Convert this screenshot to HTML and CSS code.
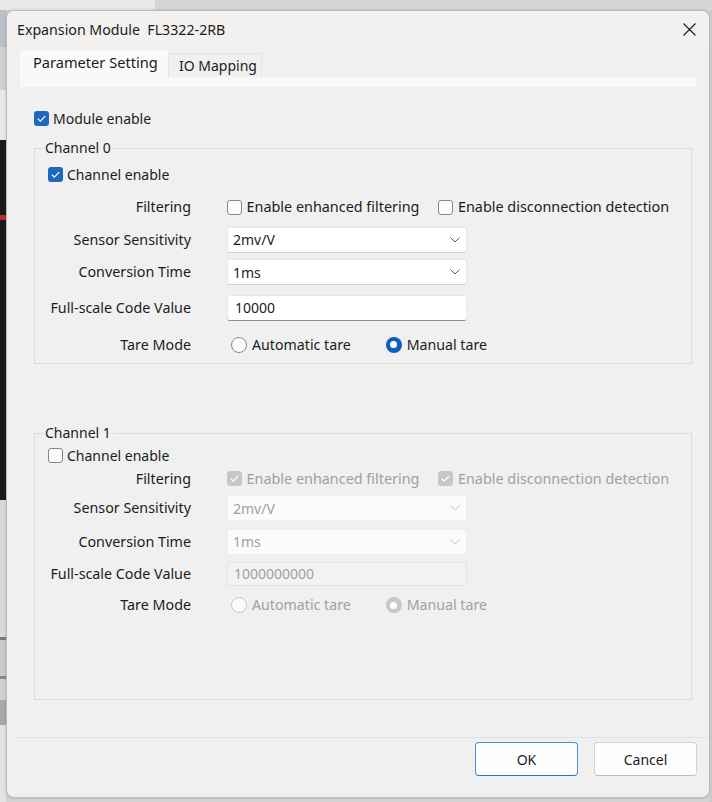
FILE: index.html
```html
<!DOCTYPE html>
<html>
<head>
<meta charset="utf-8">
<title>Expansion Module FL3322-2RB</title>
<link rel="stylesheet" href="styles.css">
</head>
<body>
<div class="top"></div>
<div class="screen">
  <div class="left"></div>
  <div class="dialog">
    <div class="titlebar">
      <span class="title">Expansion Module&nbsp; FL3322-2RB</span>
      <svg class="close" width="13" height="13" viewBox="0 0 13 13"><path d="M0.5 0.5 L12.5 12.5 M12.5 0.5 L0.5 12.5" stroke="#1a1a1a" stroke-width="1.1" fill="none"/></svg>
    </div>
    <div class="tabs">
      <div class="tab active">Parameter Setting</div>
      <div class="tab">IO Mapping</div>
    </div>
    <div class="tabpage"></div>
    <div class="body">
      <div class="check-row module">
        <span class="cb checked"><svg width="15" height="15" viewBox="0 0 15 15"><path d="M3.8 7.6 L6.3 10.1 L11.2 5.1" stroke="#fff" stroke-width="1.3" fill="none"/></svg></span>
        <span>Module enable</span>
      </div>

      <fieldset class="group g0">
        <legend>Channel 0</legend>
        <div class="grid rows0">
          <div class="check-row chen">
            <span class="cb checked"><svg width="15" height="15" viewBox="0 0 15 15"><path d="M3.8 7.6 L6.3 10.1 L11.2 5.1" stroke="#fff" stroke-width="1.3" fill="none"/></svg></span>
            <span>Channel enable</span>
          </div>
          <div class="lbl">Filtering</div>
          <div class="ctl filters">
            <span class="cb"></span><span class="ftext">Enable enhanced filtering</span>
            <span class="cb second"></span><span class="ftext">Enable disconnection detection</span>
          </div>
          <div class="lbl">Sensor Sensitivity</div>
          <div class="ctl"><div class="combo"><span>2mv/V</span><svg width="10" height="6" viewBox="0 0 10 6"><path d="M0.5 0.5 L5 5 L9.5 0.5" stroke="#5c5c5c" stroke-width="1" fill="none"/></svg></div></div>
          <div class="lbl">Conversion Time</div>
          <div class="ctl"><div class="combo"><span>1ms</span><svg width="10" height="6" viewBox="0 0 10 6"><path d="M0.5 0.5 L5 5 L9.5 0.5" stroke="#5c5c5c" stroke-width="1" fill="none"/></svg></div></div>
          <div class="lbl">Full-scale Code Value</div>
          <div class="ctl"><div class="field">10000</div></div>
          <div class="lbl">Tare Mode</div>
          <div class="ctl radios">
            <span class="rb"></span><span class="rtext">Automatic tare</span>
            <span class="rb checked second"></span><span class="rtext">Manual tare</span>
          </div>
        </div>
      </fieldset>

      <fieldset class="group g1">
        <legend>Channel 1</legend>
        <div class="grid rows1">
          <div class="check-row chen">
            <span class="cb"></span>
            <span>Channel enable</span>
          </div>
          <div class="lbl">Filtering</div>
          <div class="ctl filters disabled">
            <span class="cb checked dis"><svg width="15" height="15" viewBox="0 0 15 15"><path d="M3.8 7.6 L6.3 10.1 L11.2 5.1" stroke="#fff" stroke-width="1.3" fill="none"/></svg></span><span class="ftext">Enable enhanced filtering</span>
            <span class="cb checked dis second"><svg width="15" height="15" viewBox="0 0 15 15"><path d="M3.8 7.6 L6.3 10.1 L11.2 5.1" stroke="#fff" stroke-width="1.3" fill="none"/></svg></span><span class="ftext">Enable disconnection detection</span>
          </div>
          <div class="lbl">Sensor Sensitivity</div>
          <div class="ctl"><div class="combo dis"><span>2mv/V</span><svg width="10" height="6" viewBox="0 0 10 6"><path d="M0.5 0.5 L5 5 L9.5 0.5" stroke="#c4c4c4" stroke-width="1" fill="none"/></svg></div></div>
          <div class="lbl">Conversion Time</div>
          <div class="ctl"><div class="combo dis"><span>1ms</span><svg width="10" height="6" viewBox="0 0 10 6"><path d="M0.5 0.5 L5 5 L9.5 0.5" stroke="#c4c4c4" stroke-width="1" fill="none"/></svg></div></div>
          <div class="lbl">Full-scale Code Value</div>
          <div class="ctl"><div class="field dis">1000000000</div></div>
          <div class="lbl">Tare Mode</div>
          <div class="ctl radios disabled">
            <span class="rb dis"></span><span class="rtext">Automatic tare</span>
            <span class="rb checked dis second"></span><span class="rtext">Manual tare</span>
          </div>
        </div>
      </fieldset>
    </div>
    <div class="footer">
      <button class="btn ok">OK</button>
      <button class="btn">Cancel</button>
    </div>
  </div>
  <div class="right"></div>
</div>
</body>
</html>
```
FILE: styles.css
```css
* { box-sizing: border-box; }

body {
  margin: 0;
  width: 712px;
  height: 802px;
  overflow: hidden;
  font-family: "Noto Sans", "Open Sans", sans-serif;
  font-size: 14px;
  color: #1c1c1c;
  background: #d3d3d3;
}

.top {
  height: 10px;
  background: linear-gradient(to right, #e9e9e9 0 155px, #d6d6d6 155px);
}

.screen {
  display: flex;
  height: 792px;
  background: #d3d3d3;
}

.left {
  width: 6px;
  flex: none;
  background: linear-gradient(to bottom,
    #b9c0c8 0 37px, #d0d0d0 37px 80px, #e9e9e9 80px 130px,
    #1b1b1b 130px 205px, #b83030 205px 210px, #1b1b1b 210px 490px,
    #dadada 490px 627px, #7a7a7a 627px 630px, #cacaca 630px 666px,
    #8a8a8a 666px 669px, #d0d0d0 669px 690px, #a9a9a9 690px 715px,
    #e3e3e3 715px);
}

.right {
  width: 2px;
  flex: none;
  background: #c9c9c9;
}

.dialog {
  width: 704px;
  height: 788px;
  flex: none;
  display: flex;
  flex-direction: column;
  background: #f0f0f0;
  border: 1px solid #bcbcbc;
  border-radius: 8px;
  overflow: hidden;
  box-shadow: 0 0 3px rgba(0, 0, 0, 0.2);
}

.titlebar {
  height: 37px;
  flex: none;
  display: flex;
  align-items: center;
  justify-content: space-between;
  padding: 0 13px 0 10px;
  background: #f3f1ef;
}

.title { line-height: 20px; font-size: 14.2px; }

.close { display: block; }

.tabs {
  flex: none;
  height: 27px;
  margin: 2px 0 0 13px;
  display: flex;
  align-items: flex-end;
}

.tab {
  width: 94px;
  height: 24px;
  padding-left: 10px;
  line-height: 23px;
  border: 1px solid #e2e2e2;
  border-bottom: 0;
  background: #f0f0f0;
}

.tab.active {
  width: 148px;
  height: 27px;
  padding-left: 13px;
  line-height: 25px;
  font-size: 14.6px;
  border: 0;
  background: #f9f9f9;
}

.tabpage {
  flex: none;
  width: 676px;
  height: 10px;
  margin-left: 13px;
  background: #f9f9f9;
}

.body {
  flex: 1;
  padding: 21px 0 0 27px;
}

.check-row {
  display: flex;
  align-items: center;
  gap: 4px;
  height: 20px;
}

.cb {
  width: 15px;
  height: 15px;
  flex: none;
  border: 1px solid #878787;
  border-radius: 3px;
  background: #fbfbfb;
  display: inline-flex;
  align-items: center;
  justify-content: center;
}

.cb svg { display: block; }

.cb.checked {
  border: 0;
  background: #1f68c1;
}

.cb.checked.dis {
  background: #c7c7c7;
}

.group {
  margin: 10px 0 0 0;
  padding: 0;
  width: 658px;
  min-width: 0;
  border: 1px solid #dcdcdc;
}

.group legend {
  margin-left: 8px;
  padding: 0 2px;
  height: 20px;
  line-height: 20px;
}

.g1 { margin-top: 59px; padding-bottom: 80px; }

.grid {
  display: grid;
  grid-template-columns: 156px 1fr;
  column-gap: 35px;
  align-items: center;
}

.rows0 { grid-template-rows: 32px 34px 31px 34px 37px 37px; }
.rows1 { grid-template-rows: 24px 23px 36px 31px 34px 28px; }

.chen {
  grid-column: 1 / 3;
  padding-left: 13px;
}

.lbl {
  text-align: right;
  line-height: 20px;
  font-size: 14.3px;
  white-space: nowrap;
}

.ctl {
  display: flex;
  align-items: center;
}

.filters .cb { margin-left: 1px; }
.filters .ftext { margin-left: 4.5px; line-height: 20px; font-size: 14.4px; white-space: nowrap; }
.filters .cb.second { margin-left: 19px; }

.disabled .ftext,
.disabled .rtext { color: #a0a0a0; }

.combo {
  width: 240px;
  height: 26px;
  margin-left: 1px;
  padding: 0 6px 0 5px;
  display: flex;
  align-items: center;
  justify-content: space-between;
  background: #ffffff;
  border: 1px solid #e6e6e6;
  border-bottom-color: #d2d2d2;
  border-radius: 3px;
}

.combo svg { display: block; }

.combo.dis {
  background: #fbfbfb;
  border-color: #ededed;
  color: #a0a0a0;
}

.field {
  width: 240px;
  height: 26px;
  margin-left: 1px;
  padding-left: 7px;
  line-height: 24px;
  background: #ffffff;
  border: 1px solid #e6e6e6;
  border-bottom: 1px solid #8c8c8c;
  border-radius: 3px;
}

.field.dis {
  height: 24px;
  line-height: 22px;
  padding-left: 6px;
  background: #f2f2f2;
  border: 1px solid #e2e2e2;
  color: #a0a0a0;
}

.radios .rb { margin-left: 5px; }
.radios .rb.second { margin-left: 35px; }
.rtext { margin-left: 5px; line-height: 20px; font-size: 14.2px; white-space: nowrap; }

.rb {
  width: 16px;
  height: 16px;
  flex: none;
  border: 1px solid #8a8a8a;
  border-radius: 50%;
  background: #fbfbfb;
  display: inline-flex;
  align-items: center;
  justify-content: center;
}

.rb.dis { border-color: #c6c6c6; }

.rb.checked {
  border: 0;
  background: #0c5fbf;
}

.rb.checked::after {
  content: "";
  width: 7px;
  height: 7px;
  border-radius: 50%;
  background: #ffffff;
}

.rb.checked.dis { background: #c8c8c8; }

.footer {
  flex: none;
  height: 60px;
  margin-left: 9px;
  padding: 4px 12px 0 0;
  border-top: 1px solid #e3e3e3;
  display: flex;
  justify-content: flex-end;
  align-items: flex-start;
  gap: 16px;
}

.btn {
  width: 103px;
  height: 34px;
  font-family: inherit;
  font-size: 14px;
  color: #1c1c1c;
  background: #fdfdfd;
  border: 1px solid #d3d3d3;
  border-bottom-color: #bdbdbd;
  border-radius: 4px;
  padding: 0;
}

.btn.ok {
  border: 1px solid #4f8fd2;
  border-bottom-color: #2f73c0;
}
```
